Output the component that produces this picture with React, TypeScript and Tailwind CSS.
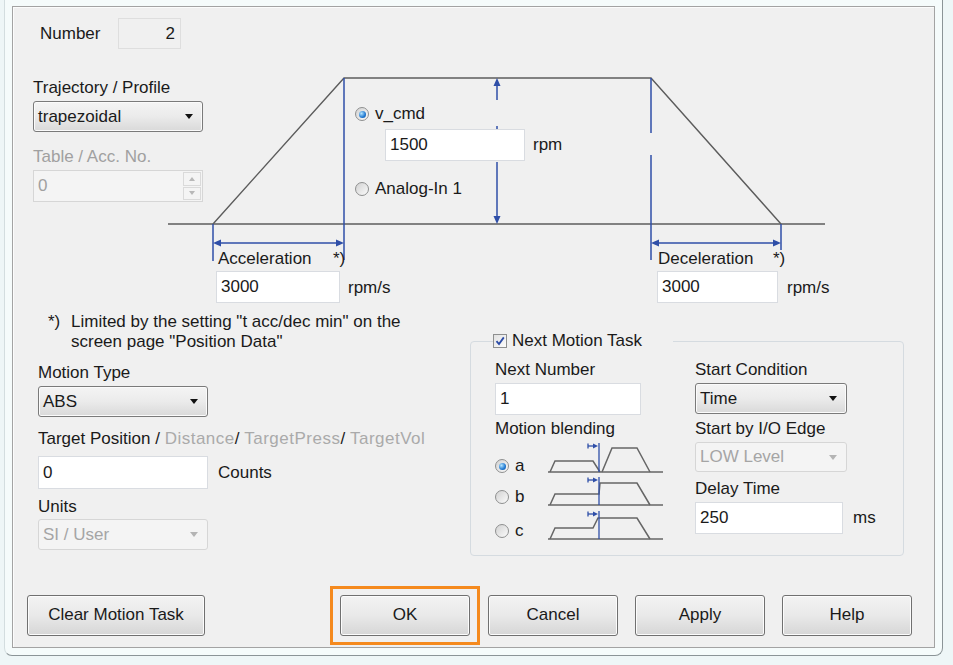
import React from "react";

const ink = "#5c5c5c";
const blue = "#2f4fa8";

function Caret({ disabled }: { disabled?: boolean }) {
  return (
    <svg width="8" height="5" viewBox="0 0 8 5">
      <polygon points="0,0 8,0 4,5" fill={disabled ? "#b4b4b4" : "#111"} />
    </svg>
  );
}

function Dropdown({ value, disabled, className = "" }: { value: string; disabled?: boolean; className?: string }) {
  return (
    <div
      className={`flex items-center justify-between rounded-[3px] border pl-[4px] pr-[9px] ${
        disabled
          ? "border-[#d6d6d6] bg-[#f4f4f4] text-[#a5a5a5]"
          : "border-[#7a7a7a] bg-gradient-to-b from-[#f4f4f4] via-[#ebebeb] to-[#d9d9d9] text-[#1a1a1a] shadow-[inset_0_0_0_1px_#fbfbfb]"
      } ${className}`}
    >
      <span>{value}</span>
      <Caret disabled={disabled} />
    </div>
  );
}

function TextBox({ value, className = "" }: { value: string; className?: string }) {
  return (
    <input
      readOnly
      value={value}
      className={`h-[32px] border border-[#d9dce1] bg-white pl-[4px] text-[#1a1a1a] outline-none ${className}`}
    />
  );
}

function Radio({ checked }: { checked?: boolean }) {
  return (
    <span className="flex h-[14px] w-[14px] shrink-0 items-center justify-center rounded-full border border-[#8e8f8f] bg-gradient-to-br from-[#d2d2d2] to-[#fbfbfb]">
      {checked && (
        <span className="h-[7px] w-[7px] rounded-full bg-[radial-gradient(circle_at_35%_35%,#b5e6ff,#1f78d1_60%,#0d4f9c)]" />
      )}
    </span>
  );
}

function Checkbox() {
  return (
    <span className="flex h-[14px] w-[14px] items-center justify-center border border-[#8e8f8f] bg-gradient-to-br from-[#e2e2e2] to-[#fcfcfc]">
      <svg width="10" height="10" viewBox="0 0 10 10">
        <path d="M1.5 5.2 L4 8 L8.8 1.4" stroke="#2a4aa6" strokeWidth="1.8" fill="none" />
      </svg>
    </span>
  );
}

function Button({ label, className = "" }: { label: string; className?: string }) {
  return (
    <button className={`h-[41px] rounded-[3px] border border-[#707070] bg-gradient-to-b from-[#f3f3f3] via-[#e9e9e9] to-[#d6d6d6] text-[#1a1a1a] shadow-[inset_0_0_0_1px_#fcfcfc] ${className}`}>
      {label}
    </button>
  );
}

// velocity profile drawn behind the controls of the upper area
function ProfileDiagram() {
  return (
    <svg className="absolute left-0 top-0" width="920" height="305" viewBox="0 0 920 305">
      <g stroke={ink} strokeWidth="1.4" fill="none">
        <line x1="155" y1="217" x2="812" y2="217" />
        <polyline points="200,217 331,71 638,71 768,217" />
      </g>
      <g stroke={blue} strokeWidth="1.5" fill="none">
        <line x1="200" y1="217" x2="200" y2="254" />
        <line x1="331" y1="71" x2="331" y2="253" />
        <line x1="203" y1="236" x2="328" y2="236" />
        <line x1="638" y1="71" x2="638" y2="126" />
        <line x1="638" y1="148" x2="638" y2="253" />
        <line x1="768" y1="217" x2="768" y2="243" />
        <line x1="641" y1="236" x2="765" y2="236" />
        <line x1="484" y1="76" x2="484" y2="93" />
        <line x1="484" y1="119" x2="484" y2="122" />
        <line x1="484" y1="155" x2="484" y2="212" />
      </g>
      <g fill={blue}>
        <polygon points="200,236 208,232.5 208,239.5" />
        <polygon points="331,236 323,232.5 323,239.5" />
        <polygon points="638,236 646,232.5 646,239.5" />
        <polygon points="768,236 760,232.5 760,239.5" />
        <polygon points="484,71 480.5,79 487.5,79" />
        <polygon points="484,217 480.5,209 487.5,209" />
      </g>
    </svg>
  );
}

function BlendShape({ variant }: { variant: "a" | "b" | "c" }) {
  const profile =
    variant === "a"
      ? "2,30 7,19 45,19 52,30 M54,30 64,6 89,6 102,30"
      : variant === "b"
      ? "2,29 7,18 51,18 52,7 89,7 102,29"
      : "2,29 7,18 45,18 50,8 89,8 102,29";
  const base = variant === "a" ? 30 : 29;
  const parts = profile.split(" M");
  return (
    <svg width="116" height="32" viewBox="0 0 116 32">
      <g stroke="#666" strokeWidth="1.5" fill="none">
        <line x1="0" y1={base} x2="115" y2={base} />
        {parts.map((p, i) => (
          <polyline key={i} points={p} />
        ))}
      </g>
      <g stroke={blue} strokeWidth="1.3" fill="none">
        <line x1="51" y1="1" x2="51" y2={base} />
        <line x1="40" y1="4" x2="47" y2="4" />
        <line x1="40" y1="1.5" x2="40" y2="6.5" />
      </g>
      <polygon points="50,4 45,1.5 45,6.5" fill={blue} />
    </svg>
  );
}

function BlendRow({ letter, checked, offset }: { letter: "a" | "b" | "c"; checked?: boolean; offset: string }) {
  return (
    <div className="flex h-[32px]">
      <div className={`flex h-[20px] w-[53px] items-center ${offset}`}>
        <Radio checked={checked} />
        <span className="ml-[6px]">{letter}</span>
      </div>
      <BlendShape variant={letter} />
    </div>
  );
}

export default function App() {
  return (
    <div className="h-[665px] w-[953px] overflow-hidden bg-[#eef6f7] font-['Liberation_Sans',Arial,sans-serif] text-[17px] leading-[20px] text-[#1a1a1a]">
      <div className="ml-[4px] h-[656px] w-[939px] rounded-b-[8px] border-x border-b border-l-[#d3dddf] border-r-[#8b9497] border-b-[#8b9497] bg-[#f5fbfb] pl-[7px] pt-[6px]">
        <div className="h-[642px] w-[923px] border border-[#a3a3a3] bg-[#f0f0f0] shadow-[inset_1px_1px_0_#fcfcfc]">
          {/* upper area: task number, profile and the velocity diagram */}
          <div className="relative h-[305px]">
            <ProfileDiagram />
            <div className="relative w-[190px] pl-[20px] pt-[11px]">
              <div className="flex items-center">
                <span className="ml-[7px] w-[78px]">Number</span>
                <div className="flex h-[31px] w-[63px] items-center justify-end border border-[#dedede] pr-[5px]">2</div>
              </div>
              <div className="mt-[29px]">Trajectory / Profile</div>
              <Dropdown value="trapezoidal" className="mt-[3px] h-[31px] w-[170px]" />
              <div className="mt-[15px] text-[#a0a0a0]">Table / Acc. No.</div>
              <div className="mt-[3px] flex h-[32px] w-[170px] border border-[#d6d6d6] bg-[#f4f4f4]">
                <span className="flex-1 pl-[4px] pt-[5px] text-[#a0a0a0]">0</span>
                <div className="my-[1px] mr-[1px] flex w-[18px] flex-col gap-[1px]">
                  <div className="flex flex-1 items-center justify-center border border-[#dadada]">
                    <svg width="6" height="4" viewBox="0 0 6 4"><polygon points="0,4 6,4 3,0" fill="#b8b8b8" /></svg>
                  </div>
                  <div className="flex flex-1 items-center justify-center border border-[#dadada]">
                    <svg width="6" height="4" viewBox="0 0 6 4"><polygon points="0,0 6,0 3,4" fill="#b8b8b8" /></svg>
                  </div>
                </div>
              </div>
            </div>

            <div className="absolute left-[342px] top-[97px] flex h-[20px] items-center">
              <Radio checked />
              <span className="ml-[6px]">v_cmd</span>
            </div>
            <TextBox value="1500" className="absolute left-[372px] top-[122px] w-[140px]" />
            <span className="absolute left-[520px] top-[128px]">rpm</span>
            <div className="absolute left-[342px] top-[172px] flex h-[20px] items-center">
              <Radio />
              <span className="ml-[6px]">Analog-In 1</span>
            </div>

            <span className="absolute left-[205px] top-[242px]">Acceleration</span>
            <span className="absolute left-[320px] top-[242px]">*)</span>
            <TextBox value="3000" className="absolute left-[203px] top-[264px] w-[124px]" />
            <span className="absolute left-[335px] top-[271px]">rpm/s</span>

            <span className="absolute left-[645px] top-[242px]">Deceleration</span>
            <span className="absolute left-[760px] top-[242px]">*)</span>
            <TextBox value="3000" className="absolute left-[644px] top-[264px] w-[121px]" />
            <span className="absolute left-[774px] top-[271px]">rpm/s</span>
          </div>

          {/* middle area: motion settings and next task group */}
          <div className="flex h-[273px]">
            <div className="w-[457px]">
              <div className="flex pl-[35px]">
                <span className="w-[23px]">*)</span>
                <div>
                  <div>Limited by the setting "t acc/dec min" on the</div>
                  <div>screen page "Position Data"</div>
                </div>
              </div>
              <div className="pl-[25px]">
                <div className="mt-[11px]">Motion Type</div>
                <Dropdown value="ABS" className="mt-[3px] h-[31px] w-[170px]" />
                <div className="mt-[12px]">
                  Target Position /{" "}
                  <span className="tracking-[0.5px] text-[#aaaaaa]">Distance</span>/{" "}
                  <span className="tracking-[0.5px] text-[#aaaaaa]">TargetPress</span>/{" "}
                  <span className="tracking-[0.5px] text-[#aaaaaa]">TargetVol</span>
                </div>
                <div className="mt-[7px] flex items-center">
                  <TextBox value="0" className="h-[33px] w-[170px]" />
                  <span className="ml-[10px]">Counts</span>
                </div>
                <div className="mt-[8px]">Units</div>
                <Dropdown value="SI / User" disabled className="mt-[2px] h-[31px] w-[170px]" />
              </div>
            </div>

            <fieldset className="mt-[19px] h-[225px] w-[434px] rounded-[4px] border border-[#d5dbe0]">
              <legend className="ml-[22px] h-[20px] w-[180px]">
                <div className="flex h-[20px] items-center">
                  <Checkbox />
                  <span className="ml-[5px]">Next Motion Task</span>
                </div>
              </legend>
              <div className="flex pl-[24px]">
                <div className="w-[200px]">
                  <div className="mt-[9px]">Next Number</div>
                  <TextBox value="1" className="mt-[3px] w-[146px]" />
                  <div className="mt-[4px]">Motion blending</div>
                  <div className="mt-[3px] flex flex-col gap-[2px]">
                    <BlendRow letter="a" checked offset="mt-[14px]" />
                    <BlendRow letter="b" offset="mt-[11px]" />
                    <BlendRow letter="c" offset="mt-[11px]" />
                  </div>
                </div>
                <div>
                  <div className="mt-[9px]">Start Condition</div>
                  <Dropdown value="Time" className="mt-[3px] h-[31px] w-[152px]" />
                  <div className="mt-[5px]">Start by I/O Edge</div>
                  <Dropdown value="LOW Level" disabled className="mt-[3px] h-[30px] w-[152px]" />
                  <div className="mt-[7px]">Delay Time</div>
                  <div className="mt-[3px] flex items-center">
                    <TextBox value="250" className="w-[148px]" />
                    <span className="ml-[10px]">ms</span>
                  </div>
                </div>
              </div>
            </fieldset>
          </div>

          {/* dialog buttons */}
          <div className="flex h-[60px] items-center">
            <Button label="Clear Motion Task" className="ml-[14px] w-[178px]" />
            <div className="ml-[125px] border-[3px] border-[#f58a1e] px-[7px] py-[6px]">
              <Button label="OK" className="w-[130px]" />
            </div>
            <Button label="Cancel" className="ml-[8px] w-[130px]" />
            <Button label="Apply" className="ml-[17px] w-[130px]" />
            <Button label="Help" className="ml-[17px] w-[130px]" />
          </div>
        </div>
      </div>
    </div>
  );
}
